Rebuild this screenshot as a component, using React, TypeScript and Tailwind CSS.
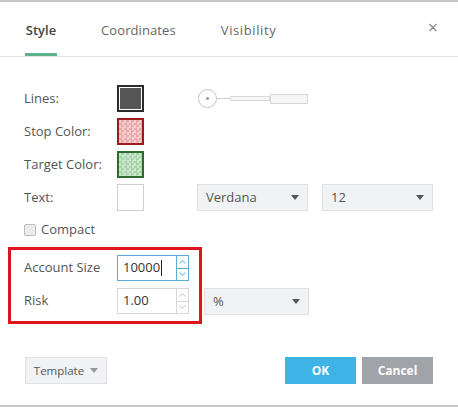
import React from 'react';

const checker =
  'repeating-conic-gradient(var(--a) 0% 25%, var(--b) 0% 50%) 0 0 / 5px 5px';

function Swatch({ kind }: { kind: 'dark' | 'red' | 'green' | 'white' }) {
  if (kind === 'dark')
    return <div className="w-[27px] h-[27px] border-2 border-[#2b2b2b] bg-[#555555] shadow-[inset_0_0_0_1px_#fff]" />;
  if (kind === 'white') return <div className="w-[27px] h-[27px] border border-[#cfcfcf] bg-white" />;
  const style =
    kind === 'red'
      ? ({ '--a': '#e7a9ab', '--b': '#f3cfd0', background: checker } as React.CSSProperties)
      : ({ '--a': '#a6d3a8', '--b': '#cde8ce', background: checker } as React.CSSProperties);
  return (
    <div className={`w-[27px] h-[27px] border-2 ${kind === 'red' ? 'border-[#9b1c1f]' : 'border-[#2e6b30]'}`}>
      <div className="w-full h-full" style={style} />
    </div>
  );
}

function Caret({ light }: { light?: boolean }) {
  return (
    <svg width="8" height="5" viewBox="0 0 8 5" className={light ? 'text-[#999]' : 'text-[#555]'}>
      <path d="M0 0h8L4 5z" fill="currentColor" />
    </svg>
  );
}

function Select({ label, className }: { label: string; className: string }) {
  return (
    <div className={`flex items-center justify-between h-[27px] px-2 bg-[#f1f2f4] border border-[#dfe1e5] text-[#555] ${className}`}>
      <span>{label}</span>
      <Caret />
    </div>
  );
}

function Spinner({ value, active }: { value: string; active?: boolean }) {
  return (
    <div className={`flex w-[72px] h-[26px] border ${active ? 'border-[#5aaed3]' : 'border-[#d6d6d6]'} bg-white`}>
      <div className="flex-1 flex items-center pl-[5px] text-[#333]">
        {value}
        {active && <span className="w-px h-[16px] bg-[#222] ml-px" />}
      </div>
      <div className={`w-[12px] flex flex-col border-l ${active ? 'border-[#5aaed3]' : 'border-[#d6d6d6]'}`}>
        <div className={`flex-1 flex items-center justify-center border-b ${active ? 'border-[#5aaed3]' : 'border-[#d6d6d6]'}`}>
          <svg width="7" height="4" viewBox="0 0 7 4"><path d="M0.5 3.5L3.5 0.8 6.5 3.5" fill="none" stroke={active ? '#5aaed3' : '#bbb'} /></svg>
        </div>
        <div className="flex-1 flex items-center justify-center">
          <svg width="7" height="4" viewBox="0 0 7 4"><path d="M0.5 0.5L3.5 3.2 6.5 0.5" fill="none" stroke={active ? '#5aaed3' : '#bbb'} /></svg>
        </div>
      </div>
    </div>
  );
}

export default function App() {
  return (
    <div className="w-[458px] h-[407px] bg-white border-t-2 border-b-2 border-[#c8c8c8] flex flex-col text-[13px] font-['Open_Sans',sans-serif] text-[#555]">
      <div className="flex items-end h-[55px] border-b border-[#e3e3e3] px-[25px] relative">
        <div className="flex h-full items-end">
          <div className="flex flex-col items-center h-full justify-end w-[32px]">
            <span className="font-semibold text-[#444] mb-[13px]">Style</span>
            <div className="h-[3px] w-full bg-[#5bb38a]" />
          </div>
          <span className="mb-[16px] ml-[44px] text-[#666] tracking-[0.1px]">Coordinates</span>
          <span className="mb-[16px] ml-[45px] text-[#666] tracking-[0.6px]">Visibility</span>
        </div>
        <span className="absolute right-[20px] top-[16px] text-[18px] text-[#888] leading-none">×</span>
      </div>

      <div className="flex flex-col px-[24px] pt-[28px] gap-[6px]">
        <div className="flex items-center h-[27px]">
          <span className="w-[93px]">Lines:</span>
          <Swatch kind="dark" />
          <div className="ml-[54px] flex items-center">
            <div className="w-[19px] h-[19px] rounded-full border border-[#c4c4c4] flex items-center justify-center">
              <div className="w-[3px] h-[3px] rounded-full bg-[#999]" />
            </div>
            <div className="w-[13px] h-px bg-[#cfcfcf]" />
            <div className="w-[40px] h-[5px] border border-[#d8d8d8] bg-[#f6f6f6]" />
            <div className="w-[38px] h-[10px] border border-[#d8d8d8] bg-[#f6f6f6]" />
          </div>
        </div>
        <div className="flex items-center h-[27px]">
          <span className="w-[93px]">Stop Color:</span>
          <Swatch kind="red" />
        </div>
        <div className="flex items-center h-[27px]">
          <span className="w-[93px]">Target Color:</span>
          <Swatch kind="green" />
        </div>
        <div className="flex items-center h-[27px]">
          <span className="w-[93px]">Text:</span>
          <Swatch kind="white" />
          <Select label="Verdana" className="ml-[53px] w-[111px]" />
          <Select label="12" className="ml-[14px] w-[111px]" />
        </div>
        <div className="flex items-center h-[23px] mt-[1px]">
          <div className="w-[12px] h-[12px] border border-[#bdbdbd] bg-[#ececec] rounded-[2px]" />
          <span className="ml-[5px]">Compact</span>
        </div>
      </div>

      <div className="flex items-start mt-[6px] ml-[8px]">
        <div className="w-[194px] h-[77px] border-[3px] border-[#e0141c] flex flex-col pl-[13px] pt-[5px] gap-[7px]">
          <div className="flex items-center h-[26px]">
            <span className="w-[93px]">Account Size</span>
            <Spinner value="10000" active />
          </div>
          <div className="flex items-center h-[26px]">
            <span className="w-[93px]">Risk</span>
            <Spinner value="1.00" />
          </div>
        </div>
        <Select label="%" className="mt-[41px] ml-[2px] w-[105px] h-[26px]" />
      </div>

      <div className="flex items-center justify-between px-[25px] mt-[33px]">
        <div className="flex items-center justify-center gap-[6px] w-[82px] h-[27px] bg-[#f1f2f4] border border-[#dfe1e5] text-[11.5px] text-[#555]">
          <span>Template</span>
          <Caret light />
        </div>
        <div className="flex gap-[6px]">
          <div className="w-[71px] h-[27px] bg-[#3eb4e6] text-white font-bold text-[12px] flex items-center justify-center">OK</div>
          <div className="w-[71px] h-[27px] bg-[#a0a3a8] text-white font-bold text-[12px] flex items-center justify-center">Cancel</div>
        </div>
      </div>
    </div>
  );
}
